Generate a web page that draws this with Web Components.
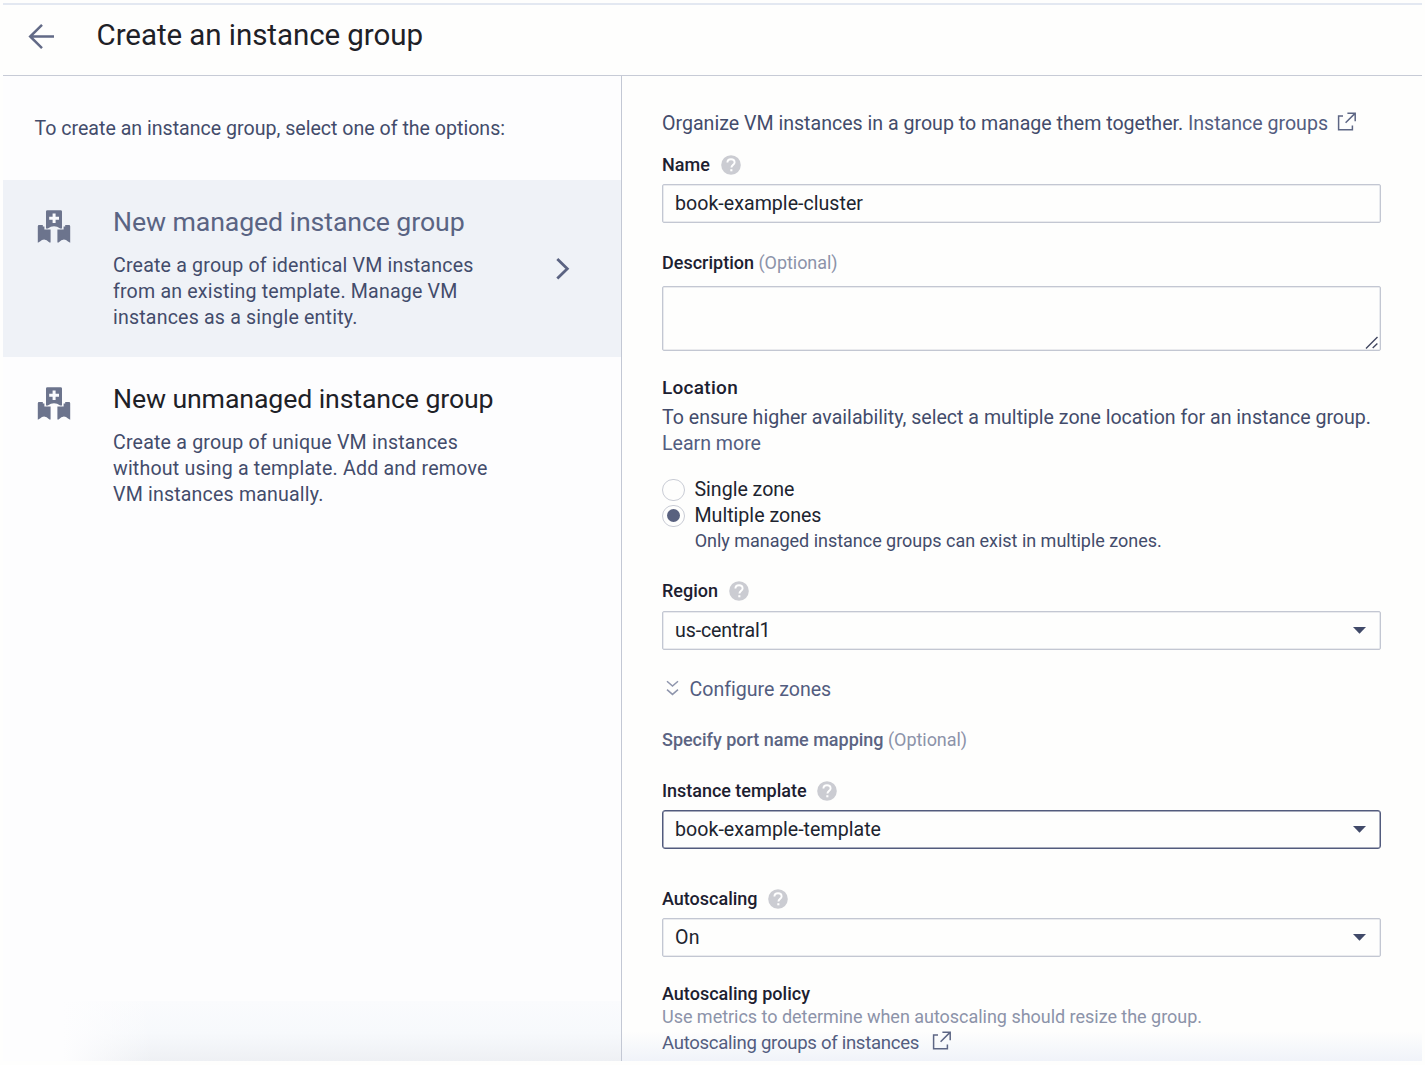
<!DOCTYPE html>
<html lang="en">
<head>
<meta charset="utf-8">
<title>Create an instance group</title>
<style>
html,body{margin:0;height:100%;overflow:hidden;background:#fefefd}
body{font-family:Roboto,"Liberation Sans",sans-serif;color:#22252c}
</style>
</head>
<body>
<instance-group-page></instance-group-page>
<script>
const define = (name, html, setup) => {
  const tpl = document.createElement('template');
  tpl.innerHTML = html;
  customElements.define(name, class extends HTMLElement {
    constructor() {
      super();
      this.attachShadow({mode: 'open'}).append(tpl.content.cloneNode(true));
    }
    connectedCallback() { if (setup) setup(this, this.shadowRoot); }
  });
};

/* One line of text, tracked so that it spans a given measure. */
define('ui-text', `<style>
:host{display:block;white-space:pre;flex:none;line-height:26px;font-size:19.6px;color:#434c6b}
:host([kind=label]){font-size:18px;line-height:20px;font-weight:500;color:#1c2030}
:host([kind=small]){font-size:18px;line-height:20px}
:host([kind=muted]){font-size:18px;line-height:20px;color:#8c93a9}
:host([kind=link]){color:#535d80}
:host([kind=value]){color:#20242f}
:host([kind=title]){font-size:29.5px;line-height:36px;color:#1e2127}
:host([kind=heading]){font-size:26.7px;line-height:32px;color:#1e2127}
:host([kind=headlink]){font-size:26.7px;line-height:32px;color:#5a6483}
</style><span><slot></slot></span>`, (el, root) => {
  const span = root.querySelector('span'), w = +el.getAttribute('w');
  if (!w) return;
  const gap = (w - span.getBoundingClientRect().width) / el.textContent.length;
  span.style.letterSpacing = gap.toFixed(3) + 'px';
});

define('help-icon', `<style>:host{display:block;flex:none;width:20px;height:20px;margin-top:-.6px}svg{display:block}</style>
<svg width="20" height="20" viewBox="0 0 20 20"><circle cx="10" cy="10" r="9.8" fill="#cbccd2"/>
<path d="M6.4 7.6C6.4 5.4 8 4.2 10 4.2S13.6 5.5 13.6 7.4C13.6 9.5 10.4 10 10.4 12.6" fill="none" stroke="#fff" stroke-width="1.9"/><rect x="9.3" y="14.2" width="2.1" height="2.1" fill="#fff"/></svg>`);

define('open-icon', `<style>:host{display:block;flex:none;width:20px;height:20px}svg{display:block}</style>
<svg width="20" height="20" viewBox="0 0 20 20" fill="none" stroke="#5d6684" stroke-width="1.5"><path d="M6 4H1.6V17.8H15.4V13.6M10.4 1.2H18.2V9.2M18 1.4L8.6 10.8"/></svg>`);

define('group-icon', `<style>:host{display:block;flex:none;width:34px;height:34px}svg{display:block}</style>
<svg width="34" height="34" viewBox="0 0 34 34" fill="#6c748d"><path d="M.8 16.2Q.8 15 2 15H5.8V16.6H7.4V19.4H13.6V32.6L12.4 32.4Q7.2 27 3 31.6L.8 32.8zM33.2 16.2Q33.2 15 32 15H28.2V16.6H26.6V19.4H20.4V32.6L21.6 32.4Q26.8 27 31 31.6L33.2 32.8z"/>
<path d="M9 1.6Q9 .2 10.4 .2H23.6Q25 .2 25 1.6V18.4H23.2Q17 14 10.8 18.4H9z"/><path d="M15.6 3.4H18.6V6.8H22V9.8H18.6V13H15.6V9.8H12.2V6.8H15.6z" fill="#fafbfd"/></svg>`);

define('field-label', `<style>:host{display:flex;gap:10.5px;align-items:center;height:20px;flex:none}</style><slot></slot>`);

define('text-box', `<style>
:host{display:flex;flex:none;align-items:center;box-sizing:border-box;width:719px;height:39px;border:1px solid #c3c7d2;border-radius:2px;padding:0 14px 0 12px;justify-content:space-between;box-shadow:inset 0 0 0 .5px #d5d8e0}
:host([tall]){height:65px;align-items:flex-end;justify-content:flex-end;padding:0 1px 1px}
:host([focused]){border-color:#525b7d;border-radius:3px;box-shadow:inset 0 0 0 .5px #525b7d}
svg{display:none}
:host([select]) ::slotted(*){margin-top:1px}
:host([select]) .caret,:host([tall]) .grip{display:block}
</style><slot></slot>
<svg class="caret" width="13" height="7" viewBox="0 0 13 7"><path d="M0 0H13L6.5 6.8z" fill="#414a69"/></svg>
<svg class="grip" width="14" height="13" viewBox="0 0 14 13" stroke="#414760" stroke-width="1.4"><path d="M1 12.4L12.5 .9M7.7 12L12.4 7.6"/></svg>`);

define('radio-row', `<style>
:host{display:flex;align-items:center;gap:10px;height:26px;flex:none}
i{box-sizing:border-box;width:22.5px;height:22.5px;border:1.4px solid #c9ccd5;border-radius:50%;display:grid;place-items:center}
:host([checked]) i::after{content:"";width:13px;height:13px;border-radius:50%;background:#59617f}
</style><i></i><slot></slot>`);

define('option-card', `<style>
:host{display:flex;flex:none;box-sizing:border-box;height:177px;padding:29.5px 49px 0 34.5px;gap:42px}
:host([selected]){background:#eff2f7}
.body{flex:1;display:flex;flex-direction:column}
.desc{margin-top:15.5px}
.head{margin-top:-4px}
.arrow{display:none;margin-top:46.5px}
:host([selected]) .arrow{display:block}
</style><group-icon></group-icon>
<div class="body"><div class="head"><slot name="head"></slot></div><div class="desc"><slot></slot></div></div>
<svg class="arrow" width="18" height="25" viewBox="0 0 18 25"><path d="M3.3 3L13.3 12.7L3.3 22.4" fill="none" stroke="#5b6382" stroke-width="2.8"/></svg>`);

define('page-header', `<style>
:host{display:flex;flex:none;box-sizing:border-box;height:73px;border-top:2px solid #e3e8f1;border-bottom:1.5px solid #c7cbd6;padding:12px 0 0 25px;gap:42px}
svg{margin-top:6.3px}
</style><svg width="27" height="27" viewBox="0 0 27 27" fill="none" stroke="#626a86" stroke-width="2.5"><path d="M26 13.5H2M14 1.8L2.2 13.5L14 25.2"/></svg><slot></slot>`);

define('side-panel', `<style>
:host{display:flex;flex-direction:column;flex:none;box-sizing:border-box;width:619.5px;border-right:1.5px solid #c3c8d4;background:
 linear-gradient(90deg,#fdfdfe 60px,#fdfdfe00 150px) 0 100%/100% 62px no-repeat,
 linear-gradient(#fafbfd 0,#f7f9fc 32px,#eef0f4 60px) 0 100%/100% 60px no-repeat,#fdfdfe}
.intro{box-sizing:border-box;padding:40px 0 0 32px;height:104.4px}
</style><div class="intro"><slot name="intro"></slot></div><slot></slot>`);

define('form-panel', `<style>
:host{display:flex;flex-direction:column;flex:1;padding:34.5px 0 0 40px;background:linear-gradient(#fefefd00,#f0f3f9) 0 100%/100% 30px no-repeat}
.row{display:flex;flex:none;align-items:center}
</style>
<div class="row"><ui-text w="526">Organize VM instances in a group to manage them together. </ui-text><ui-text kind="link" w="140">Instance groups</ui-text><open-icon style="margin:-4px 0 0 9px"></open-icon></div>
<field-label style="margin-top:18.5px"><ui-text kind="label" w="48">Name</ui-text><help-icon></help-icon></field-label>
<text-box style="margin-top:9px"><ui-text kind="value" w="188">book-example-cluster</ui-text></text-box>
<div class="row" style="margin-top:30px"><ui-text kind="label" w="96.5">Description </ui-text><ui-text kind="muted" w="79">(Optional)</ui-text></div>
<text-box tall style="margin-top:13px"></text-box>
<ui-text kind="label" w="76" style="margin-top:27px;font-size:19px">Location</ui-text>
<ui-text w="709" style="margin-top:6.5px">To ensure higher availability, select a multiple zone location for an instance group.</ui-text>
<ui-text kind="link" w="99" style="margin-top:.7px">Learn more</ui-text>
<radio-row style="margin-top:19.8px"><ui-text kind="value" w="100">Single zone</ui-text></radio-row>
<radio-row checked><ui-text kind="value" w="127">Multiple zones</ui-text></radio-row>
<ui-text kind="small" w="467" style="margin:2px 0 0 32.7px">Only managed instance groups can exist in multiple zones.</ui-text>
<field-label style="margin-top:30px"><ui-text kind="label" w="56">Region</ui-text><help-icon></help-icon></field-label>
<text-box select style="margin-top:10px"><ui-text kind="value" w="95.5">us-central1</ui-text></text-box>
<div class="row" style="margin-top:27px"><svg width="13" height="16" viewBox="0 0 13 16" style="margin:-3px 10.5px 0 4px" fill="none" stroke="#8f96ad" stroke-width="1.5"><path d="M1 1.2L6.5 6L12 1.2M1 9.6L6.5 14.4L12 9.6"/></svg><ui-text kind="link" w="141">Configure zones</ui-text></div>
<div class="row" style="margin-top:27px"><ui-text kind="label" w="226" style="color:#5b6482">Specify port name mapping </ui-text><ui-text kind="muted" w="79">(Optional)</ui-text></div>
<field-label style="margin-top:31px"><ui-text kind="label" w="144.5">Instance template</ui-text><help-icon></help-icon></field-label>
<text-box select focused style="margin-top:9px"><ui-text kind="value" w="206">book-example-template</ui-text></text-box>
<field-label style="margin-top:40px"><ui-text kind="label" w="95.5">Autoscaling</ui-text><help-icon></help-icon></field-label>
<text-box select style="margin-top:9px"><ui-text kind="value" w="25">On</ui-text></text-box>
<ui-text kind="label" w="148" style="margin-top:27px">Autoscaling policy</ui-text>
<ui-text kind="muted" w="540" style="margin-top:3px">Use metrics to determine when autoscaling should resize the group.</ui-text>
<div class="row" style="margin-top:3px"><ui-text kind="link" w="257" style="font-size:18.6px">Autoscaling groups of instances</ui-text><open-icon style="margin:-4px 0 0 13px"></open-icon></div>`);

define('instance-group-page', `<style>
:host{display:flex;flex-direction:column;box-sizing:border-box;width:1422px;height:1061px;padding:3px 0 0 2.5px}
main{display:flex;flex:1;min-height:0}
</style>
<page-header><ui-text kind="title" w="326.5">Create an instance group</ui-text></page-header>
<main>
<side-panel>
<ui-text slot="intro" w="470.5">To create an instance group, select one of the options:</ui-text>
<option-card selected>
<ui-text slot="head" kind="headlink" w="351.5">New managed instance group</ui-text>
<ui-text w="360.5">Create a group of identical VM instances</ui-text>
<ui-text w="344.5">from an existing template. Manage VM</ui-text>
<ui-text w="244.5">instances as a single entity.</ui-text>
</option-card>
<option-card>
<ui-text slot="head" kind="heading" w="380.5">New unmanaged instance group</ui-text>
<ui-text w="345">Create a group of unique VM instances</ui-text>
<ui-text w="374.5">without using a template. Add and remove</ui-text>
<ui-text w="210.5">VM instances manually.</ui-text>
</option-card>
</side-panel>
<form-panel></form-panel>
</main>`);
</script>
</body>
</html>
